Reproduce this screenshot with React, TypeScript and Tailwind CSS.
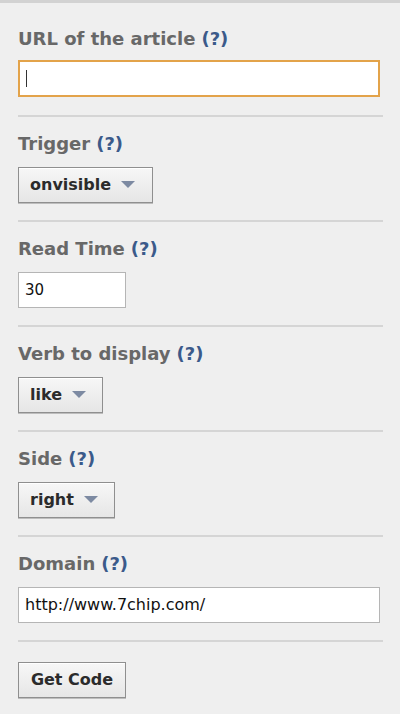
import React from "react";

const Help = () => <span className="ml-[6px] text-[#3b5a8a]">(?)</span>;

function Label({ text }: { text: string }) {
  return (
    <div className="h-[20px] leading-[20px] text-[18px] font-bold text-[#686868]">
      {text}
      <Help />
    </div>
  );
}

function Select({ value, width }: { value: string; width: string }) {
  return (
    <div
      className={`${width} h-[36px] flex items-center gap-[10px] pl-[11px] border border-[#8f8f8f] bg-gradient-to-b from-[#f7f7f7] to-[#e6e6e6] shadow-[inset_0_1px_0_#ffffff,0_1px_0_#bdbdbd] text-[16px] font-bold text-[#2b2b2b]`}
    >
      <span>{value}</span>
      <svg width="14" height="8" viewBox="0 0 14 8">
        <path d="M0 0 L14 0 L7 7 Z" fill="#7d8aa2" />
      </svg>
    </div>
  );
}

function Divider() {
  return <div className="h-[2px] w-[365px] bg-[#d5d5d5]" />;
}

export default function App() {
  return (
    <main
      className="w-[400px] h-[714px] bg-[#efefef] border-t-[3px] border-[#d2d2d2] overflow-hidden"
      style={{ fontFamily: '"DejaVu Sans", Tahoma, sans-serif' }}
    >
      <div className="h-full pl-[18px] pt-[26px] flex flex-col border-l-2 border-[#f7f7f7] -ml-[2px]">
        <Label text="URL of the article" />
        <div className="mt-[11px] w-[362px] h-[37px] bg-white border-2 border-[#e3a34a] flex items-center pl-[6px]">
          <div className="w-[1px] h-[17px] bg-[#333]" />
        </div>
        <div className="mt-[18px]">
          <Divider />
        </div>

        <div className="pt-[17px]">
          <Label text="Trigger" />
        </div>
        <div className="mt-[13px]">
          <Select value="onvisible" width="w-[135px]" />
        </div>
        <div className="mt-[17px]">
          <Divider />
        </div>

        <div className="pt-[17px]">
          <Label text="Read Time" />
        </div>
        <div className="mt-[13px] w-[108px] h-[36px] bg-white border border-[#b5b5b5] flex items-center pl-[6px] text-[15px] text-[#111]">
          30
        </div>
        <div className="mt-[17px]">
          <Divider />
        </div>

        <div className="pt-[17px]">
          <Label text="Verb to display" />
        </div>
        <div className="mt-[13px]">
          <Select value="like" width="w-[85px]" />
        </div>
        <div className="mt-[17px]">
          <Divider />
        </div>

        <div className="pt-[17px]">
          <Label text="Side" />
        </div>
        <div className="mt-[13px]">
          <Select value="right" width="w-[97px]" />
        </div>
        <div className="mt-[17px]">
          <Divider />
        </div>

        <div className="pt-[17px]">
          <Label text="Domain" />
        </div>
        <div className="mt-[13px] w-[362px] h-[36px] bg-white border border-[#b5b5b5] flex items-center pl-[6px] text-[16px] text-[#111]">
          http://www.7chip.com/
        </div>
        <div className="mt-[17px]">
          <Divider />
        </div>

        <div className="mt-[20px] w-[108px] h-[36px] flex items-center justify-center border border-[#8f8f8f] bg-gradient-to-b from-[#f7f7f7] to-[#e6e6e6] shadow-[inset_0_1px_0_#ffffff,0_1px_0_#bdbdbd] text-[16px] font-bold text-[#2b2b2b]">
          Get Code
        </div>
      </div>
    </main>
  );
}
